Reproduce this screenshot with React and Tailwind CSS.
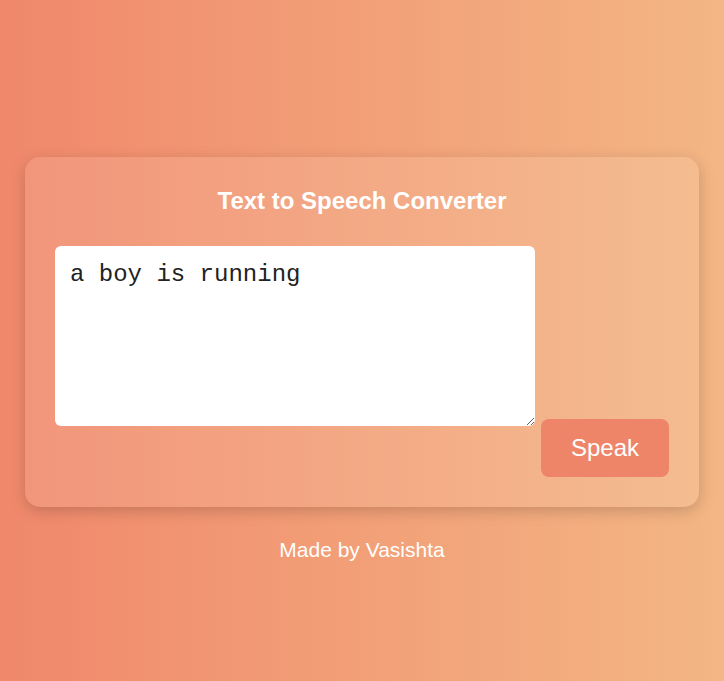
import React, { useState } from 'react';

// 텍스트 음성 변환 화면
const App = () => {
  const [text, setText] = useState('a boy is running');

  const speak = () => {
    if (typeof window !== 'undefined' && window.speechSynthesis) {
      window.speechSynthesis.speak(new SpeechSynthesisUtterance(text));
    }
  };

  return (
    <div
      className="min-h-screen w-full bg-gradient-to-r from-[#f0886b] to-[#f3b684] pt-[157px] px-[25px] text-white"
      style={{ fontFamily: '"Liberation Sans", Arial, sans-serif' }}
    >
      {/* 카드 */}
      <div className="rounded-[15px] bg-white/10 px-[30px] pt-[30px] pb-[30px] shadow-[0_4px_15px_rgba(0,0,0,0.18)]">
        <h2 className="text-center text-[24px] font-bold leading-[28px]">Text to Speech Converter</h2>

        <div className="mt-[31px] flex items-start gap-[6px]">
          <textarea
            value={text}
            onChange={(e) => setText(e.target.value)}
            className="h-[180px] w-[480px] rounded-[6px] bg-white p-[15px] text-[24px] leading-[28px] text-[#222] outline-none"
            style={{ fontFamily: '"Liberation Mono", "Courier New", monospace' }}
          />
          <button
            onClick={speak}
            className="mt-[173px] rounded-[8px] bg-[#ee8569] px-[30px] py-[15px] text-[24px] leading-[28px] text-white"
          >
            Speak
          </button>
        </div>
      </div>

      {/* 푸터 */}
      <p className="mt-[31px] text-center text-[21px] leading-[24px]">Made by Vasishta</p>
    </div>
  );
};

export default App;
